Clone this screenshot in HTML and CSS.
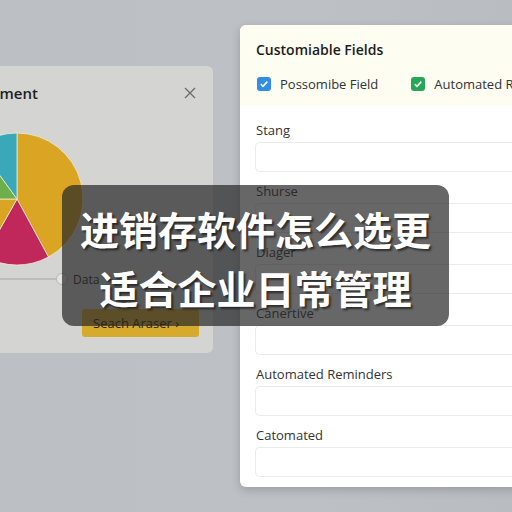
FILE: index.html
```html
<!DOCTYPE html>
<html lang="zh-CN">

<head>
  <meta charset="UTF-8" />
  <meta name="viewport" content="width=device-width, initial-scale=1.0" />
  <title>进销存软件怎么选更适合企业日常管理</title>
  <link rel="stylesheet" href="styles.css">
</head>

<body>
  <div class="stage">
    <div class="report_card">
      <div class="report_head">
        <span class="report_title">Inventory Management</span>
        <svg class="close" width="12" height="12" viewBox="0 0 12 12">
          <path d="M1 1 L11 11 M11 1 L1 11" stroke="#6b6b6b" stroke-width="1.3" fill="none" />
        </svg>
      </div>

      <svg class="pie" width="134" height="134" viewBox="-67 -67 134 134">
        <g stroke="#f3ead2" stroke-width="0.8">
          <path d="M0 0 L0 -66 A66 66 0 0 1 31.49 58 Z" fill="#d9a522" />
          <path d="M0 0 L31.49 58 A66 66 0 0 1 -32.5 57.45 Z" fill="#c0285c" />
          <path d="M0 0 L-32.5 57.45 A66 66 0 0 1 -66 0 Z" fill="#d9a522" />
          <path d="M0 0 L-66 0 A66 66 0 0 1 -38.8 -53.4 Z" fill="#6db04a" />
          <path d="M0 0 L-38.8 -53.4 A66 66 0 0 1 0 -66 Z" fill="#3aa8b8" />
        </g>
      </svg>

      <div class="slider_row">
        <div class="slider_track"></div>
        <div class="slider_knob"></div>
        <span class="slider_label">Data</span>
      </div>

      <div class="search_btn">Seach Araser &rsaquo;</div>
    </div>

    <div class="fields_card">
      <div class="fields_head">
        <h2>Customiable Fields</h2>
        <div class="checks">
          <label class="check"><span class="box blue">
              <svg width="10" height="10" viewBox="0 0 10 10">
                <path d="M1.8 5.2 L4 7.3 L8.3 2.6" stroke="#fff" stroke-width="1.6" fill="none" />
              </svg></span>Possomibe Field</label>
          <label class="check"><span class="box green">
              <svg width="10" height="10" viewBox="0 0 10 10">
                <path d="M1.8 5.2 L4 7.3 L8.3 2.6" stroke="#fff" stroke-width="1.6" fill="none" />
              </svg></span>Automated Reminders</label>
        </div>
      </div>

      <div class="fields_body">
        <div class="field">
          <div class="field_label">Stang</div>
          <div class="input"></div>
        </div>
        <div class="field">
          <div class="field_label">Shurse</div>
          <div class="input"></div>
        </div>
        <div class="field">
          <div class="field_label">Diager</div>
          <div class="input"></div>
        </div>
        <div class="field">
          <div class="field_label">Canertive</div>
          <div class="input"></div>
        </div>
        <div class="field">
          <div class="field_label">Automated Reminders</div>
          <div class="input"></div>
        </div>
        <div class="field">
          <div class="field_label">Catomated</div>
          <div class="input"></div>
        </div>
      </div>
    </div>
  </div>

  <div class="caption">
    <p>进销存软件怎么选更</p>
    <p>适合企业日常管理</p>
  </div>
</body>

</html>
```

FILE: styles.css
```css
body {
  margin: 0;
  width: 512px;
  height: 512px;
  overflow: hidden;
  background: linear-gradient(90deg, #bcbfc3 0%, #bdc0c4 60%, #b9bcc0 100%);
  font-family: "Open Sans", "Noto Sans", sans-serif;
  color: #2a2a2a;
  position: relative;
}

.stage {
  display: flex;
  align-items: flex-start;
  gap: 27px;
}

/* left chart card, partly off screen */
.report_card {
  flex-shrink: 0;
  width: 353px;
  height: 287px;
  margin-left: -140px;
  margin-top: 66px;
  background: #d4d4d2;
  border-radius: 6px;
  box-sizing: border-box;
  display: flex;
  flex-direction: column;
}

.report_head {
  display: flex;
  justify-content: space-between;
  align-items: center;
  padding: 18px 17px 0 16px;
  height: 18px;
}

.report_title {
  font-size: 15px;
  font-weight: 600;
  color: #1e1e1e;
  margin-left: -8px;
}

.pie {
  display: block;
  margin-top: 30px;
  margin-left: 90px;
}

.slider_row {
  display: flex;
  align-items: center;
  height: 14px;
  margin-top: 6px;
  padding-left: 16px;
}

.slider_track {
  width: 180px;
  height: 2px;
  background: #bcbcbc;
}

.slider_knob {
  width: 10px;
  height: 10px;
  border: 1px solid #b8b8b8;
  border-radius: 50%;
  background: #e4e4e4;
}

.slider_label {
  margin-left: 5px;
  font-size: 12px;
  color: #222;
}

.search_btn {
  margin-top: 23px;
  margin-left: 222px;
  width: 117px;
  height: 28px;
  line-height: 28px;
  padding-left: 11px;
  box-sizing: border-box;
  background: #d6aa2c;
  border-radius: 3px;
  font-size: 13px;
  color: #2c2410;
}

/* right form card */
.fields_card {
  flex-shrink: 0;
  width: 300px;
  height: 462px;
  margin-top: 25px;
  background: #fff;
  border-radius: 6px;
  overflow: hidden;
  box-shadow: 0 3px 10px rgba(0, 0, 0, 0.18);
}

.fields_head {
  background: #fdfdf2;
  padding: 16px 16px 13px;
}

.fields_head h2 {
  margin: 0;
  font-size: 14px;
  font-weight: 600;
  line-height: 18px;
  color: #1c1c1c;
}

.checks {
  display: flex;
  gap: 32px;
  margin-top: 17px;
  white-space: nowrap;
}

.check {
  display: flex;
  align-items: center;
  gap: 9px;
  font-size: 13px;
  line-height: 16px;
  color: #333;
}

.box {
  width: 14px;
  height: 14px;
  border-radius: 3px;
  display: flex;
  align-items: center;
  justify-content: center;
  margin-left: 1px;
}

.blue {
  background: #2f8de6;
}

.green {
  background: #24a756;
}

.fields_body {
  padding: 17px 0 0 15px;
}

.field {
  margin-bottom: 11px;
}

.field_label {
  font-size: 13px;
  line-height: 16px;
  color: #333;
  padding-left: 1px;
  margin-bottom: 4px;
}

.input {
  height: 28px;
  border: 1px solid #ebebeb;
  border-radius: 5px;
  border-right: none;
  border-top-right-radius: 0;
  border-bottom-right-radius: 0;
  background: #fff;
}

/* title banner laid over the cards */
.caption {
  position: absolute;
  left: 62px;
  top: 185px;
  width: 387px;
  height: 141px;
  border-radius: 12px;
  background: rgba(38, 38, 38, 0.7);
  display: flex;
  flex-direction: column;
  justify-content: center;
  align-items: center;
}

.caption p {
  margin: 0;
  font-family: "Noto Sans CJK SC", "Noto Sans", sans-serif;
  font-size: 39px;
  font-weight: 700;
  line-height: 55px;
  color: #fff;
  text-shadow: 2px 2px 2px rgba(0, 0, 0, 0.55);
  padding-top: 4px;
}
```
